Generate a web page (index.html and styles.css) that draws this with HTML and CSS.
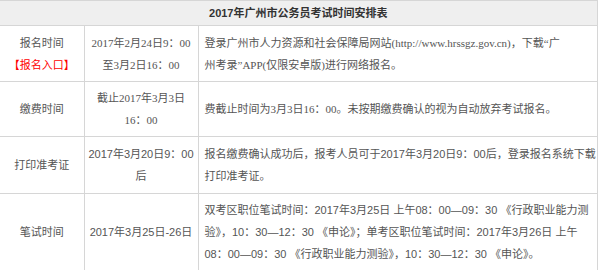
FILE: index.html
```html
<!DOCTYPE html>
<html lang="zh-CN">
<head>
<meta charset="utf-8">
<title>2017年广州市公务员考试时间安排表</title>
<link rel="stylesheet" href="styles.css">
</head>
<body>
<table class="sched">
  <colgroup>
    <col class="c1">
    <col class="c2">
    <col class="c3">
  </colgroup>
  <thead>
    <tr><th colspan="3" class="title">2017年广州市公务员考试时间安排表</th></tr>
  </thead>
  <tbody>
    <tr class="ra">
      <td class="name">报名时间<br><span class="red">【报名入口】</span></td>
      <td class="date serif">2017年2月24日9：00<br>至3月2日16：00</td>
      <td class="desc serif">登录广州市人力资源和社会保障局网站(http://www.hrssgz.gov.cn)，下载“广<br>州考录”APP(仅限安卓版)进行网络报名。</td>
    </tr>
    <tr class="rb">
      <td class="name">缴费时间</td>
      <td class="date serif">截止2017年3月3日<br>16：00</td>
      <td class="desc serif">费截止时间为3月3日16：00。未按期缴费确认的视为自动放弃考试报名。</td>
    </tr>
    <tr class="rc">
      <td class="name">打印准考证</td>
      <td class="date">2017年3月20日9：00<br>后</td>
      <td class="desc">报名缴费确认成功后，报考人员可于2017年3月20日9：00后，登录报名系统下载<br>打印准考证。</td>
    </tr>
    <tr>
      <td class="name">笔试时间</td>
      <td class="date">2017年3月25日-26日</td>
      <td class="desc">双考区职位笔试时间：2017年3月25日 上午08：00—09：30 《行政职业能力测<br>验》，10：30—12：30 《申论》；单考区职位笔试时间：2017年3月26日 上午<br>08：00—09：30 《行政职业能力测验》，10：30—12：30 《申论》。</td>
    </tr>
  </tbody>
</table>
</body>
</html>
```
FILE: styles.css
```css
html, body {
  margin: 0;
  padding: 0;
  background: #fff;
}
body {
  font-family: "Liberation Sans", "Noto Sans CJK SC", sans-serif;
  font-size: 11px;
  color: #555;
}
.sched {
  border-collapse: collapse;
  table-layout: fixed;
  width: 597px;
}
.c1 { width: 84px; }
.c2 { width: 114px; }
.c3 { width: 399px; }
.sched th,
.sched td {
  border: 1px solid #d6d6d6;
  line-height: 22px;
  padding: 5px 5px;
  vertical-align: middle;
}
.sched tr > :first-child {
  border-left: none;
}
.sched tr:last-child td {
  border-bottom: none;
}
.sched .title {
  background: #efefef;
  color: #333;
  font-weight: bold;
  font-size: 11px;
  height: 24px;
  line-height: 24px;
  padding: 0;
  text-align: center;
}
.sched .name,
.sched .date {
  text-align: center;
  white-space: nowrap;
}
.sched .date {
  padding: 5px 2px;
}
.sched .desc {
  text-align: left;
  white-space: nowrap;
  padding-left: 6px;
}
.serif {
  font-family: "Liberation Serif", "Noto Sans CJK SC", serif;
}
.red {
  color: #f00;
}
.ra td { height: 45px; }
.rb td { height: 44px; }
.rc td { height: 46px; }
```
